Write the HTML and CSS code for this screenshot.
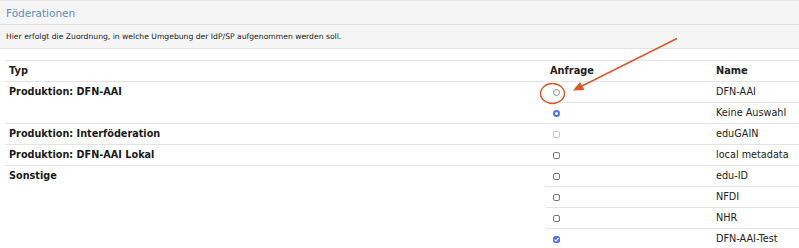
FILE: index.html
```html
<!DOCTYPE html>
<html lang="de">
  <head>
    <meta charset="UTF-8" />
    <meta name="viewport" content="width=device-width, initial-scale=1.0" />
    <title>Föderationen</title>
    <link rel="stylesheet" href="styles.css">
  </head>
  <body>
    <div class="page">
      <!-- Panel header -->
      <div class="panel">
        <div class="panel-title">Föderationen</div>
        <div class="panel-body">Hier erfolgt die Zuordnung, in welche Umgebung der IdP/SP aufgenommen werden soll.</div>
      </div>

      <!-- Federation table -->
      <table class="fed-table">
        <thead>
          <tr>
            <th class="col-typ">Typ</th>
            <th class="col-req">Anfrage</th>
            <th>Name</th>
          </tr>
        </thead>
        <tbody>
          <tr>
            <td class="typ" rowspan="2">Produktion: DFN-AAI</td>
            <td><input type="radio" name="dfn" class="radio"></td>
            <td>DFN-AAI</td>
          </tr>
          <tr>
            <td><input type="radio" name="dfn" class="radio" checked></td>
            <td>Keine Auswahl</td>
          </tr>
          <tr>
            <td class="typ">Produktion: Interföderation</td>
            <td><input type="checkbox" class="check" disabled></td>
            <td>eduGAIN</td>
          </tr>
          <tr>
            <td class="typ">Produktion: DFN-AAI Lokal</td>
            <td><input type="checkbox" class="check"></td>
            <td>local metadata</td>
          </tr>
          <tr>
            <td class="typ" rowspan="4">Sonstige</td>
            <td><input type="checkbox" class="check"></td>
            <td>edu-ID</td>
          </tr>
          <tr>
            <td><input type="checkbox" class="check"></td>
            <td>NFDI</td>
          </tr>
          <tr>
            <td><input type="checkbox" class="check"></td>
            <td>NHR</td>
          </tr>
          <tr>
            <td><input type="checkbox" class="check" checked></td>
            <td>DFN-AAI-Test</td>
          </tr>
        </tbody>
      </table>

      <!-- Annotation overlay -->
      <svg class="annotation" width="799" height="248" viewBox="0 0 799 248">
        <ellipse cx="552.5" cy="93.5" rx="12" ry="10" fill="none" stroke="#d9572b" stroke-width="1.4"/>
        <line x1="677" y1="38.5" x2="582" y2="86" stroke="#d9572b" stroke-width="1.4"/>
        <polygon points="573,90.5 580,82 584.5,90" fill="#d9572b"/>
      </svg>
    </div>
  </body>
</html>
```

FILE: styles.css
```css
/* General Styling */
* {
  margin: 0;
  padding: 0;
  box-sizing: border-box;
  font-family: "DejaVu Sans", Verdana, sans-serif;
}

body {
  background-color: #fff;
  color: #222;
}

.page {
  position: relative;
  width: 799px;
  height: 248px;
  overflow: hidden;
}

/* Panel */
.panel {
  background-color: #f5f5f5;
  border-top: 1px solid #e6e6e6;
  border-bottom: 1px solid #e2e2e2;
}

.panel-title {
  color: #5b8fcb;
  font-size: 10.5px;
  line-height: 22px;
  padding: 1px 6px 0;
  border-bottom: 1px solid #e0e0e0;
}

.panel-body {
  font-size: 7.65px;
  line-height: 23px;
  padding: 0 6px;
}

/* Table */
.fed-table {
  margin: 11px 0 0 5px;
  width: 794px;
  border-collapse: collapse;
  font-size: 9.7px;
}

.fed-table th,
.fed-table td {
  text-align: left;
  vertical-align: top;
  padding: 0 4px;
  height: 20.7px;
  line-height: 20px;
  border-top: 1px solid #e4e4e4;
}

.fed-table th {
  font-weight: bold;
  font-size: 9.8px;
}

.col-typ {
  width: 541px;
}

.col-req {
  width: 166px;
}

.typ {
  font-weight: bold;
  font-size: 9.7px;
  color: #1a1a1a;
}

/* Form controls */
.radio,
.check {
  appearance: none;
  -webkit-appearance: none;
  width: 7px;
  height: 7px;
  border: 1px solid #8a8a8a;
  background: #fff;
  margin: 7px 0 0 3px;
  vertical-align: top;
  display: inline-block;
}

.radio {
  border-radius: 50%;
}

.radio:checked {
  border: 2px solid #4a78f0;
  background: #fff;
}

.check {
  border-radius: 2px;
  border-color: #7a7a7a;
}

.check:disabled {
  border-color: #c6c6c6;
}

.check:checked {
  border-color: #4a78f0;
  background: #4a78f0 url("data:image/svg+xml;utf8,<svg xmlns='http://www.w3.org/2000/svg' viewBox='0 0 7 7'><path d='M1.5 3.6 L3 5 L5.6 1.8' fill='none' stroke='white' stroke-width='1.1'/></svg>") center / 7px 7px no-repeat;
}

/* Annotation */
.annotation {
  position: absolute;
  left: 0;
  top: 0;
  pointer-events: none;
}
```
